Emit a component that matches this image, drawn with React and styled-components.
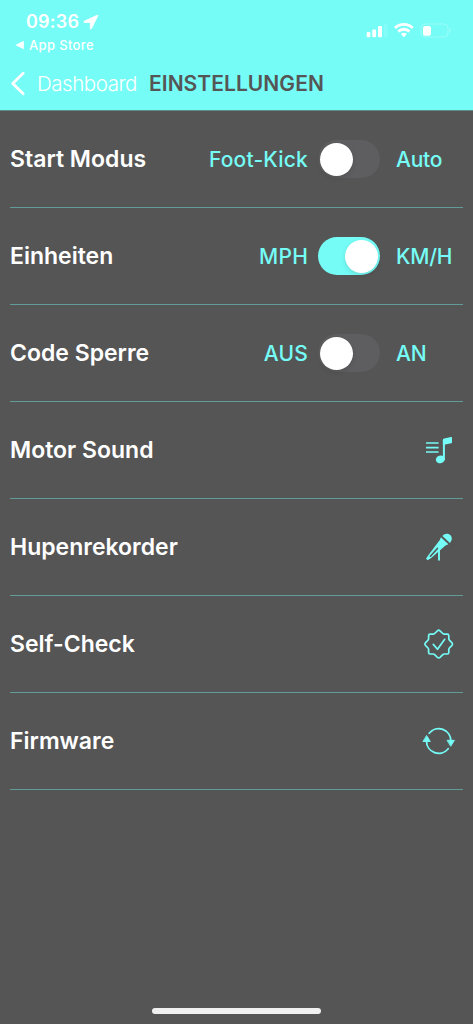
import React from "react";
import styled, { createGlobalStyle } from "styled-components";

const App = () => (
  <Screen>
    <GlobalStyle />
    <Header>
      <StatusBar>
        <Clock>
          <Time>09:36</Time>
          <LocationIcon />
        </Clock>
        <StatusIcons />
      </StatusBar>
      <ReturnLink>
        <ReturnArrow />
        <span>App Store</span>
      </ReturnLink>
      <NavBar>
        <BackIcon />
        <BackLabel>Dashboard</BackLabel>
        <Title>EINSTELLUNGEN</Title>
      </NavBar>
    </Header>
    <List>
      <ToggleRow label="Start Modus" left="Foot-Kick" right="Auto" />
      <ToggleRow label="Einheiten" left="MPH" right="KM/H" on />
      <ToggleRow label="Code Sperre" left="AUS" right="AN" />
      <LinkRow label="Motor Sound" icon={<MusicIcon />} />
      <LinkRow label="Hupenrekorder" icon={<MicIcon />} />
      <LinkRow label="Self-Check" icon={<CheckIcon />} />
      <LinkRow label="Firmware" icon={<UpdateIcon />} />
    </List>
    <HomeIndicator />
  </Screen>
);

const ToggleRow = ({ label, left, right, on }) => (
  <Row>
    <Label>{label}</Label>
    <Option>{left}</Option>
    <Switch $on={on} role="switch" aria-checked={!!on}>
      <Knob />
    </Switch>
    <RightOption>{right}</RightOption>
  </Row>
);

const LinkRow = ({ label, icon }) => (
  <Row>
    <Label>{label}</Label>
    <IconBox>{icon}</IconBox>
  </Row>
);

const LocationIcon = () => (
  <svg width="16" height="16" viewBox="0 0 16 16">
    <path
      d="M14.3 1.2 1.2 7.2c-.8.4-.6 1.2.2 1.2h5.9v6c0 .8.8 1 1.2.2l6.3-12.8c.2-.5-.1-.8-.5-.6Z"
      fill="#fff"
      stroke="#fff"
      strokeWidth="0.9"
      strokeLinejoin="round"
    />
  </svg>
);

const StatusIcons = () => (
  <svg width="86" height="18" viewBox="0 0 86 18" fill="#fff">
    <rect x="0.7" y="11" width="3.7" height="5.2" rx="1" />
    <rect x="6.2" y="8.5" width="3.9" height="7.7" rx="1" />
    <rect x="12" y="5" width="4" height="11.2" rx="1" />
    <rect x="18" y="2.5" width="3.4" height="13.5" rx="1" opacity="0.12" />
    <g fill="none" stroke="#fff" strokeWidth="2.9">
      <path d="M29 7c5-4.8 12.7-4.8 17.7 0" />
      <path d="M32.2 10.5c3.3-3 8.1-3 11.3 0" />
    </g>
    <path d="m34.9 13c1.7-1.6 4.2-1.6 5.9 0L37.9 16.3Z" />
    <rect x="55" y="3" width="27" height="13" rx="4" fill="none" stroke="#fff" strokeOpacity="0.25" />
    <rect x="57" y="5" width="8" height="9.8" rx="2" />
    <path d="M83.3 7.2c2.3.7 2.3 3.7 0 4.5Z" opacity="0.25" />
  </svg>
);

const ReturnArrow = () => (
  <svg width="9" height="10" viewBox="0 0 9 10">
    <path d="M8.8 .8v8.4L.3 5Z" fill="#fff" />
  </svg>
);

const BackIcon = () => (
  <svg width="16" height="26" viewBox="0 0 16 26">
    <path d="M13.2 3.2 2.7 13.4 13.2 23.7" fill="none" stroke="#fff" strokeWidth="2.8" strokeLinecap="round" strokeLinejoin="round" />
  </svg>
);

const MusicIcon = () => (
  <Icon>
    <path d="M3 9h12.6M3 13.6h12.6M3 18h12.6" strokeWidth="1.7" strokeLinecap="butt" />
    <path d="M20.9 25.5V6.2" strokeWidth="2" />
    <path d="M19.9 6.2c0-.9.3-1.4 1.2-1.7l7-1.6c.6-.1.9.1.9.7v4.6c0 .6-.2.9-.8 1l-8.3 1.9Z" fill="currentColor" stroke="none" />
    <ellipse cx="17.3" cy="25.4" rx="4.5" ry="3.8" fill="currentColor" stroke="none" transform="rotate(-18 17.3 25.4)" />
  </Icon>
);

const MicIcon = () => (
  <Icon>
    <path d="M19.4 4.9c2.2-2.7 5.6-2.8 7.8-.8s2.2 5.4-.3 7.8Z" fill="currentColor" stroke="none" />
    <path d="m17.9 6.3 7.5 6.9-2.9 1.2L8.2 26.9 4.6 29.3l-1.6-1.6 2.3-3.4L16.8 9Z" fill="currentColor" stroke="none" />
    <path d="m7.4 25.2 7.2-7.9" stroke="#555" strokeWidth="1.6" />
    <path d="M16 18v10.7" strokeWidth="1.9" />
  </Icon>
);

const CheckIcon = () => (
  <Icon>
    <path
      d="M14.4 2.8q1.3-1.2 2.6 0l2.8 2.7q.6.6 1.4.6h3q1.6 0 1.6 1.6v3.1q0 .8.6 1.4l2.6 2.6q1.1 1.2 0 2.5l-2.6 2.7q-.6.6-.6 1.4v3q0 1.6-1.6 1.6h-3q-.8 0-1.4.6L17 29.4q-1.3 1.1-2.6 0l-2.8-2.8q-.6-.6-1.4-.6h-3q-1.6 0-1.6-1.6v-3q0-.8-.6-1.4l-2.6-2.7q-1.1-1.3 0-2.5L5 12.2q.6-.6.6-1.4V7.7q0-1.6 1.6-1.6h3q.8 0 1.4-.6Z"
      strokeWidth="1.7"
    />
    <path d="m10.3 16.4 4.2 4.9 7.2-10" strokeWidth="1.7" />
  </Icon>
);

const UpdateIcon = () => (
  <Icon>
    <path d="M6.2 8.2A12.2 12.2 0 0 1 27.9 16" strokeWidth="1.8" />
    <path d="M25.2 23.8A12.2 12.2 0 0 1 3.5 16" strokeWidth="1.8" />
    <path d="M24.4 15.3h7L27.9 21ZM.3 16.5h7L3.8 10.8Z" fill="currentColor" strokeWidth="0.9" />
  </Icon>
);

const GlobalStyle = createGlobalStyle`
  body {
    margin: 0;
    background: #555;
  }
`;

const Screen = styled.div`
  box-sizing: border-box;
  display: flex;
  flex-direction: column;
  height: 1024px;
  padding-bottom: 10px;
  background: #555;
  color: #fff;
  font-family: Inter, "Liberation Sans", sans-serif;
  white-space: nowrap;
  overflow: hidden;
`;

const Header = styled.header`
  box-sizing: border-box;
  flex: none;
  height: 111px;
  padding-top: 11px;
  background: #75fcf6;
  border-bottom: 1px solid #5e8c8a;
`;

const StatusBar = styled.div`
  display: flex;
  justify-content: space-between;
  height: 26px;
  padding: 0 21px 0 26px;

  > svg {
    margin-top: 10px;
  }
`;

const Clock = styled.div`
  display: flex;
  align-items: center;
  gap: 4px;
  height: 21px;
`;

const Time = styled.span`
  width: 53px;
  font-size: 18px;
  font-weight: 600;
  letter-spacing: 0.2px;
`;

const ReturnLink = styled.div`
  display: flex;
  align-items: center;
  gap: 5px;
  height: 15px;
  padding-left: 15px;
  font-size: 13px;
  font-weight: 500;
  letter-spacing: 0.35px;
`;

const NavBar = styled.nav`
  display: flex;
  align-items: center;
  height: 26px;
  margin-top: 18px;
  padding-left: 10px;
`;

const BackLabel = styled.span`
  box-sizing: border-box;
  width: 123px;
  padding-left: 11px;
  font-size: 20.5px;
  font-weight: 300;
  letter-spacing: -0.45px;
`;

const Title = styled.h1`
  margin: 0;
  color: #555;
  font-size: 21px;
  font-weight: 600;
  letter-spacing: 0.05px;
`;

const List = styled.main`
  flex: 1;
  padding: 0 10px;
`;

const Row = styled.div`
  box-sizing: border-box;
  display: flex;
  align-items: center;
  height: 97px;
  border-bottom: 1px solid #619c99;
`;

const Label = styled.span`
  flex: 1;
  font-size: 23px;
  font-weight: 600;
  letter-spacing: 0;
`;

const Option = styled.span`
  color: #75fcf6;
  font-size: 21px;
  font-weight: 500;
  letter-spacing: 0.2px;
`;

const RightOption = styled(Option)`
  width: 67px;
  letter-spacing: -0.2px;
`;

const Switch = styled.div`
  box-sizing: border-box;
  display: flex;
  align-items: center;
  justify-content: ${({ $on }) => ($on ? "flex-end" : "flex-start")};
  width: 62px;
  height: 38px;
  margin: 0 16px 0 10px;
  padding: 0 2px;
  border-radius: 19px;
  background: ${({ $on }) => ($on ? "#75fcf6" : "#5e5e60")};
`;

const Knob = styled.div`
  width: 33px;
  height: 33px;
  border-radius: 50%;
  background: #fff;
  box-shadow: 0 2px 5px rgba(0, 0, 0, 0.12);
`;

const IconBox = styled.div`
  display: flex;
  margin-right: 8px;
  color: #75fcf6;
`;

const Icon = styled.svg.attrs({ viewBox: "0 0 32 32", width: 32, height: 32 })`
  fill: none;
  stroke: currentColor;
  stroke-linecap: round;
  stroke-linejoin: round;
  overflow: visible;
`;

const HomeIndicator = styled.div`
  align-self: center;
  width: 169px;
  height: 6px;
  border-radius: 3px;
  background: #f0f0f0;
`;

export default App;
